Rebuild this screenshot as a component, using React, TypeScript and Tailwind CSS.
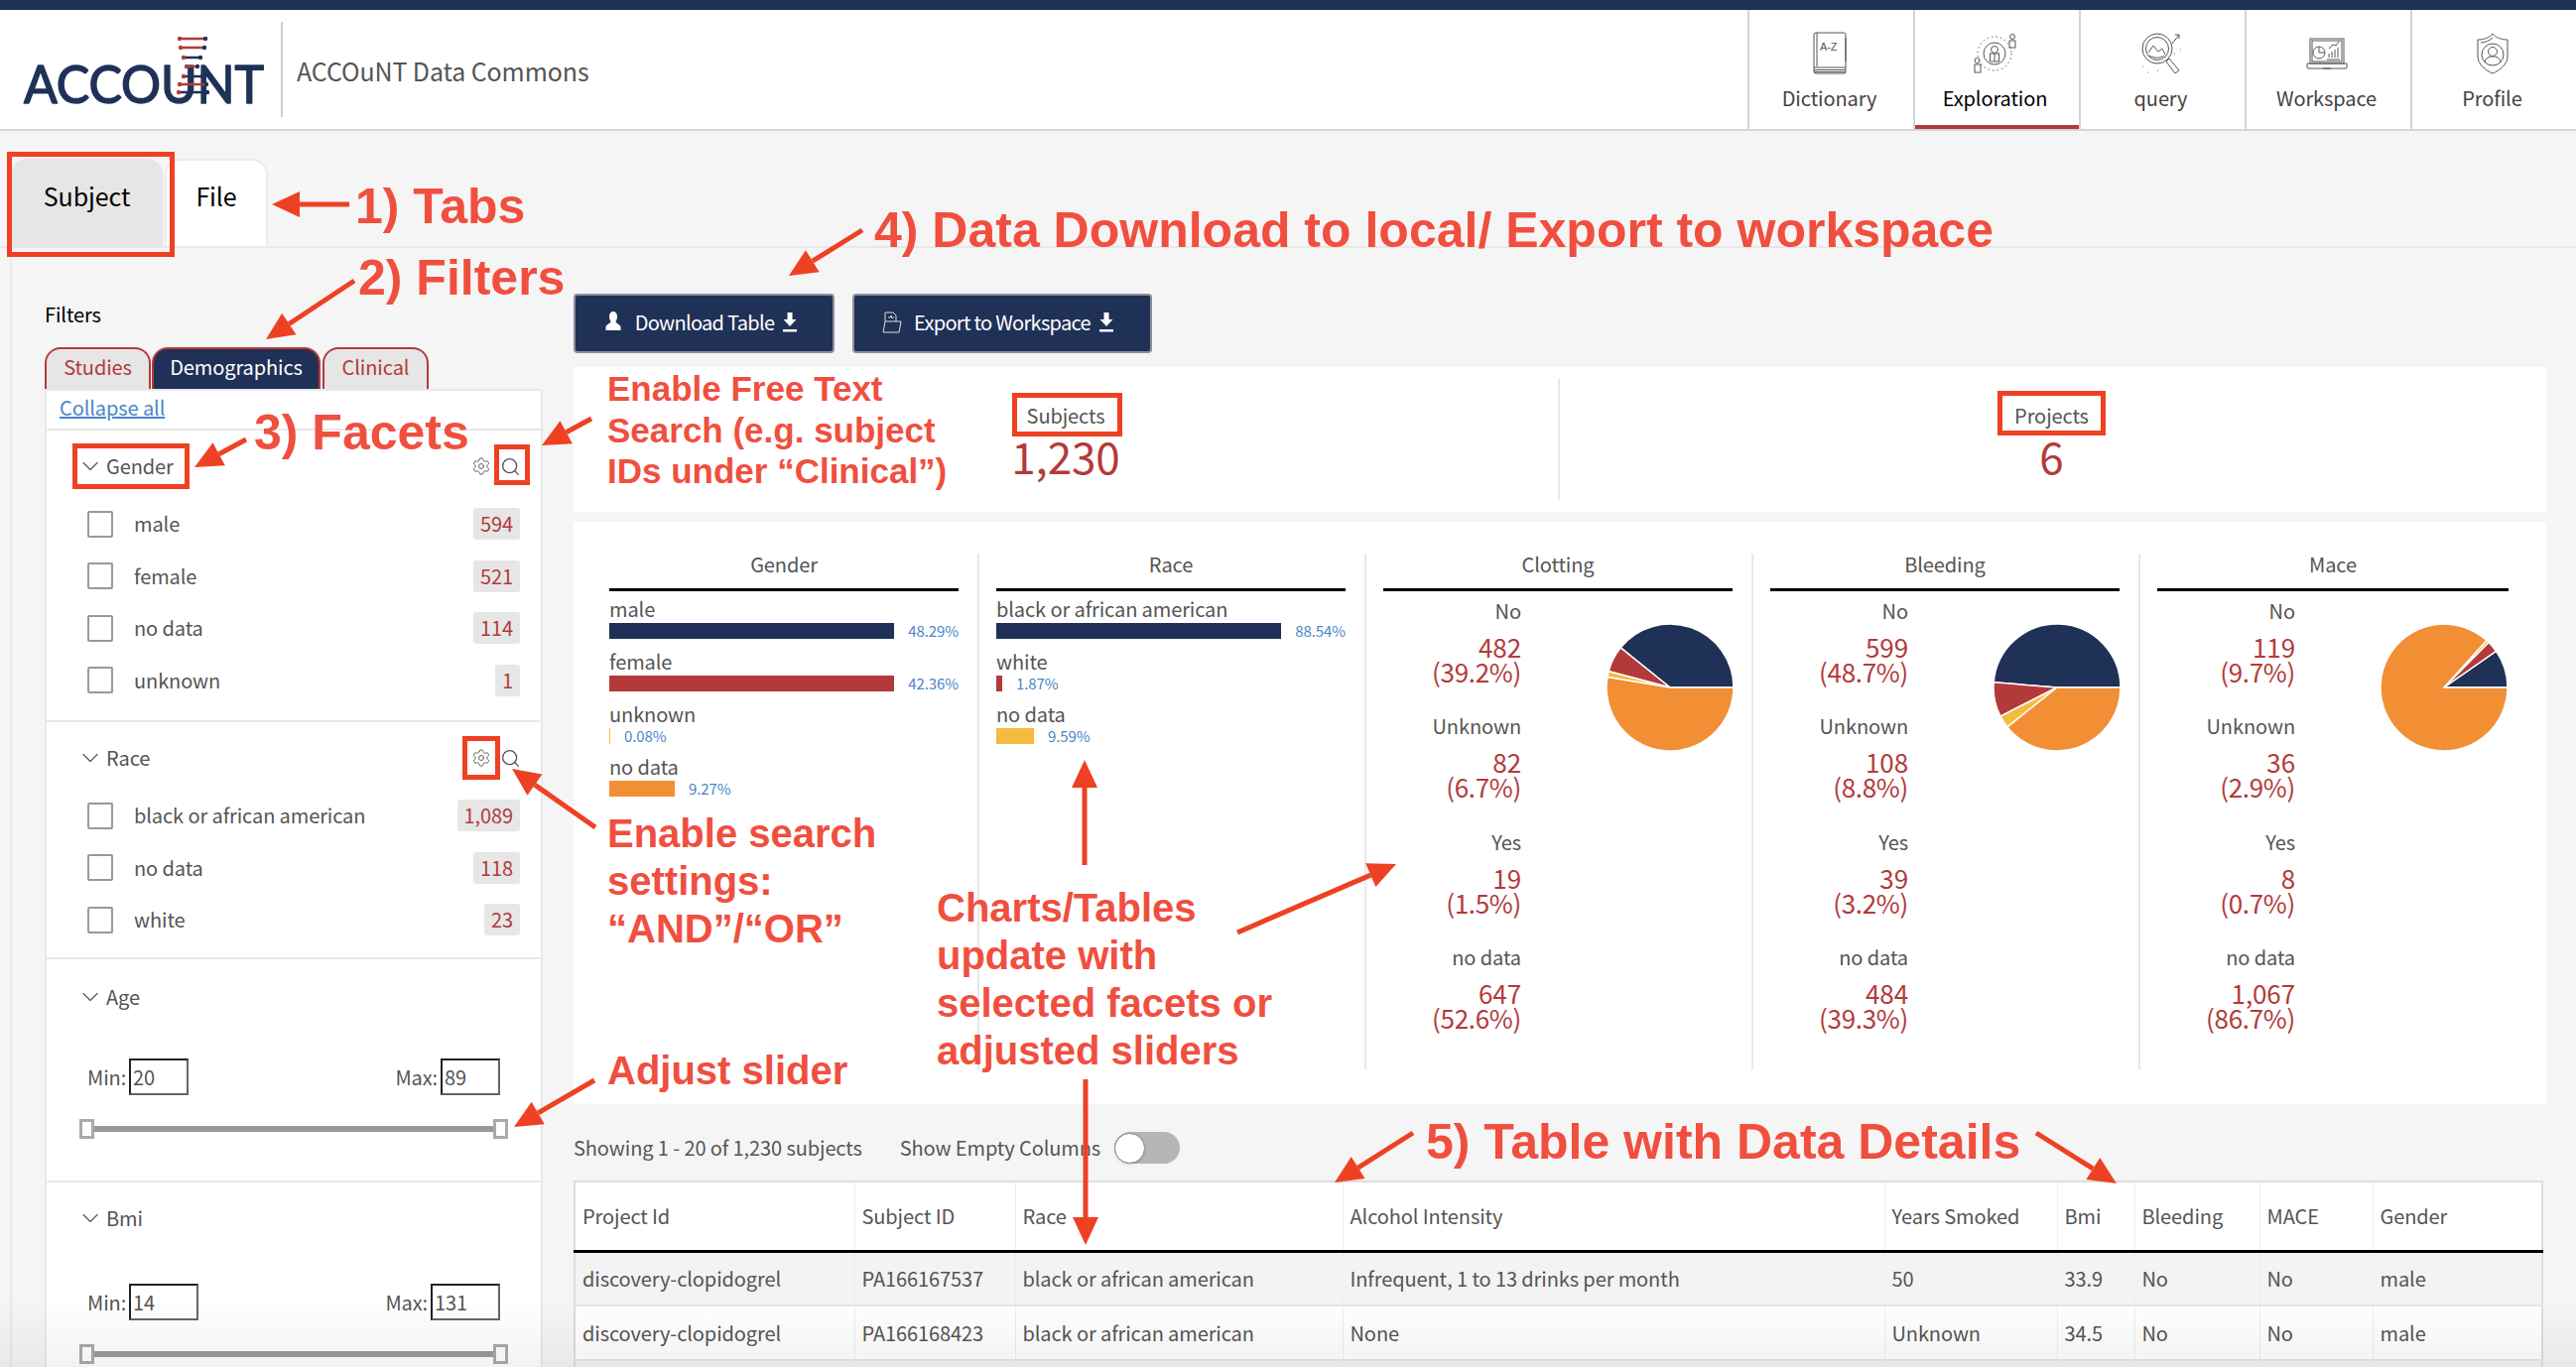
import { ChevronDown, Search, Settings } from "lucide-react";

const NAVY = "#1f3156";
const RED = "#b33a3a";
const SLICE_COLORS = [NAVY, RED, "#f5bb3f", "#f28f35"];

type Bar = { label: string; pct: string; width: number; color: string };

const BAR_CHARTS: { title: string; pad: string; bars: Bar[] }[] = [
  {
    title: "Gender",
    pad: "w-[409px] pl-[36px] pr-[19px]",
    bars: [
      { label: "male", pct: "48.29%", width: 291, color: NAVY },
      { label: "female", pct: "42.36%", width: 291, color: RED },
      { label: "unknown", pct: "0.08%", width: 1, color: "#f5bb3f" },
      { label: "no data", pct: "9.27%", width: 66, color: "#f28f35" },
    ],
  },
  {
    title: "Race",
    pad: "w-[390px] pl-[17px] pr-[19px]",
    bars: [
      { label: "black or african american", pct: "88.54%", width: 291, color: NAVY },
      { label: "white", pct: "1.87%", width: 6, color: RED },
      { label: "no data", pct: "9.59%", width: 38, color: "#f5bb3f" },
    ],
  },
];

const PIE_CHARTS = [
  {
    title: "Clotting",
    values: [39.2, 6.7, 1.5, 52.6],
    stats: [
      ["No", "482", "(39.2%)"],
      ["Unknown", "82", "(6.7%)"],
      ["Yes", "19", "(1.5%)"],
      ["no data", "647", "(52.6%)"],
    ],
  },
  {
    title: "Bleeding",
    values: [48.7, 8.8, 3.2, 39.3],
    stats: [
      ["No", "599", "(48.7%)"],
      ["Unknown", "108", "(8.8%)"],
      ["Yes", "39", "(3.2%)"],
      ["no data", "484", "(39.3%)"],
    ],
  },
  {
    title: "Mace",
    values: [9.7, 2.9, 0.7, 86.7],
    stats: [
      ["No", "119", "(9.7%)"],
      ["Unknown", "36", "(2.9%)"],
      ["Yes", "8", "(0.7%)"],
      ["no data", "1,067", "(86.7%)"],
    ],
  },
];

const TABLE_COLUMNS = [
  { name: "Project Id", width: "w-[282px]" },
  { name: "Subject ID", width: "w-[162px]" },
  { name: "Race", width: "w-[330px]" },
  { name: "Alcohol Intensity", width: "w-[546px]" },
  { name: "Years Smoked", width: "w-[174px]" },
  { name: "Bmi", width: "w-[78px]" },
  { name: "Bleeding", width: "w-[126px]" },
  { name: "MACE", width: "w-[114px]" },
  { name: "Gender", width: "" },
];

const TABLE_ROWS = [
  ["discovery-clopidogrel", "PA166167537", "black or african american", "Infrequent, 1 to 13 drinks per month", "50", "33.9", "No", "No", "male"],
  ["discovery-clopidogrel", "PA166168423", "black or african american", "None", "Unknown", "34.5", "No", "No", "male"],
  ["", "", "", "", "", "", "", "", ""],
];

// Red callouts drawn on top of the page screenshot: [x, center y, size, text]
const NOTES: [number, number, number, string][] = [
  [358, 208, 50, "1) Tabs"],
  [361, 280, 50, "2) Filters"],
  [256, 436, 50, "3) Facets"],
  [881, 232, 50, "4) Data Download to local/ Export to workspace"],
  [612, 392, 35, "Enable Free Text"],
  [612, 434, 35, "Search (e.g. subject"],
  [612, 475, 35, "IDs under “Clinical”)"],
  [612, 840, 40, "Enable search"],
  [612, 888, 40, "settings:"],
  [612, 936, 40, "“AND”/“OR”"],
  [612, 1079, 40, "Adjust slider"],
  [944, 915, 40, "Charts/Tables"],
  [944, 963, 40, "update with"],
  [944, 1011, 40, "selected facets or"],
  [944, 1059, 40, "adjusted sliders"],
  [1437, 1151, 50, "5) Table with Data Details"],
];

const ARROWS: [number, number, number, number][] = [
  [352, 206, 274, 206],
  [357, 283, 268, 342],
  [248, 443, 196, 471],
  [596, 422, 546, 449],
  [869, 232, 795, 278],
  [600, 834, 516, 775],
  [599, 1089, 518, 1136],
  [1093, 872, 1093, 766],
  [1247, 940, 1407, 871],
  [1094, 1088, 1094, 1255],
  [1424, 1142, 1345, 1192],
  [2052, 1142, 2133, 1193],
];

function Arrow({ from, to }: { from: [number, number]; to: [number, number] }) {
  const [x1, y1] = from;
  const [x2, y2] = to;
  const len = Math.hypot(x2 - x1, y2 - y1);
  const ux = (x2 - x1) / len;
  const uy = (y2 - y1) / len;
  const bx = x2 - ux * 28;
  const by = y2 - uy * 28;
  const head = `${x2},${y2} ${bx - uy * 13},${by + ux * 13} ${bx + uy * 13},${by - ux * 13}`;
  return (
    <g>
      <line x1={x1} y1={y1} x2={bx} y2={by} stroke="#ee4123" strokeWidth="5" />
      <polygon points={head} fill="#ee4123" />
    </g>
  );
}

function Pie({ values }: { values: number[] }) {
  const r = 64;
  let start = 0;
  return (
    <svg width="132" height="132" viewBox="-66 -66 132 132" className="shrink-0">
      {values.map((v, i) => {
        const end = start + (v / 100) * Math.PI * 2;
        const d = `M0 0 L${r * Math.cos(start)} ${-r * Math.sin(start)} A${r} ${r} 0 ${v > 50 ? 1 : 0} 0 ${r * Math.cos(end)} ${-r * Math.sin(end)} Z`;
        start = end;
        return <path key={i} d={d} fill={SLICE_COLORS[i]} stroke="#fff" strokeWidth="1.5" />;
      })}
    </svg>
  );
}

function Logo() {
  return (
    <svg width="250" height="72" viewBox="0 0 250 72" className="shrink-0">
      <text x="2" y="67" fontFamily="Lato" fontSize="52" fill={NAVY} stroke={NAVY} strokeWidth="1.5" strokeLinejoin="round" textLength="242" lengthAdjust="spacingAndGlyphs">
        ACCOUNT
      </text>
      {[
        [159, 185, 0, RED],
        [160, 184, 9, RED],
        [163, 180, 19, NAVY],
        [166, 177, 28, RED],
        [163, 182, 38, NAVY],
        [159, 186, 46, RED],
        [158, 187, 54, NAVY],
      ].map(([a, b, y, c], i) => (
        <g key={i}>
          <line x1={a} x2={b} y1={(y as number) + 2} y2={(y as number) + 2} stroke={c as string} strokeWidth="2.5" />
          <circle cx={a as number} cy={(y as number) + 2} r="2.2" fill={RED} />
          <circle cx={b as number} cy={(y as number) + 2} r="2.2" fill={NAVY} />
        </g>
      ))}
    </svg>
  );
}

function NavIcon({ name }: { name: string }) {
  const common = { fill: "none", stroke: "#555", strokeWidth: 1 };
  if (name === "Dictionary")
    return (
      <svg width="44" height="44" viewBox="0 0 44 44" {...common}>
        <rect x="6" y="1" width="32" height="41" rx="2" />
        <path d="M9 1v34M6 36h32M6 38.5h32M6 40.5h32M38 6v24" />
        <text x="12" y="19" fontSize="11" fill="#555" stroke="none" fontFamily="Liberation Sans">A-Z</text>
      </svg>
    );
  if (name === "Exploration")
    return (
      <svg width="44" height="44" viewBox="0 0 44 44" {...common}>
        <circle cx="21" cy="22" r="17" strokeDasharray="1.5 3" />
        <circle cx="21" cy="22" r="11" />
        <circle cx="21" cy="18" r="3.5" />
        <rect x="16.5" y="22" width="9" height="8" />
        <path d="M21 22v8" />
        <circle cx="39" cy="5" r="2.5" />
        <rect x="36" y="9" width="6" height="7" />
        <circle cx="3.5" cy="29" r="2.5" />
        <rect x="1" y="33" width="6" height="8" />
      </svg>
    );
  if (name === "query")
    return (
      <svg width="44" height="44" viewBox="0 0 44 44" {...common}>
        <circle cx="18" cy="17" r="15" />
        <circle cx="18" cy="17" r="11.5" />
        <path d="M9 21l5-7 5 6 4-3 3 6M10 24c5 3 11 3 15 0" />
        <path d="M27 30l3-3 10 12-4 3zM33 12l7-9M36 3h4v4" />
        <path d="M3 35h.5M8 41h.5M18 39h.5M41 18h.5M35 22h.5" strokeWidth="1.5" />
      </svg>
    );
  if (name === "Workspace")
    return (
      <svg width="44" height="44" viewBox="0 0 44 44" {...common}>
        <rect x="5" y="7" width="34" height="25" />
        <rect x="7" y="9" width="30" height="21" />
        <path d="M2 32h40v4a1 1 0 0 1-1 1H3a1 1 0 0 1-1-1zM18 37h8" />
        <circle cx="14" cy="21" r="6" />
        <path d="M14 15v6h6M24 26v-4M27 26v-6M30 26v-8M33 26v-10M24 17l4-4 3 1 3-4" />
        <path d="M22 28h13" />
      </svg>
    );
  return (
    <svg width="44" height="44" viewBox="0 0 44 44" {...common}>
      <path d="M22 2c-3 4-9 6-15 6v17c0 8 8 14 15 17 7-3 15-9 15-17V8c-6 0-12-2-15-6z" />
      <path d="M22 6c-3 3-8 5-12 5" />
      <circle cx="22" cy="23" r="11" />
      <circle cx="22" cy="20" r="4.5" />
      <path d="M14 31c1-5 4-6 8-6s7 1 8 6" />
    </svg>
  );
}

function NavItem({ name, active }: { name: string; active?: boolean }) {
  return (
    <div className={`relative flex w-[167px] flex-col items-center border-l-2 border-[#d5d5d5] pt-[21px] pr-[4px] ${active ? "text-black" : "text-[#444]"}`}>
      <div className="flex h-[46px] items-center justify-center">
        <NavIcon name={name} />
      </div>
      <span className="mt-[9px] text-[20px] leading-[26px]">{name}</span>
      {active && <div className="absolute right-0 bottom-0 left-0 h-[4px] bg-[#b33a3a]" />}
    </div>
  );
}

function FacetHeader({ name, tools }: { name: string; tools?: boolean }) {
  return (
    <div className="flex h-[36px] items-center pr-[20px] pl-[30px] text-[20px] text-[#555]">
      <ChevronDown size={28} strokeWidth={1} className="mr-[2px] text-[#555]" />
      <span className="leading-[26px]">{name}</span>
      {tools && (
        <div className="ml-auto flex items-center gap-[9px] text-[#555]">
          <Settings size={20} strokeWidth={1.1} />
          <Search size={21} strokeWidth={1.5} />
        </div>
      )}
    </div>
  );
}

function FacetRow({ label, count }: { label: string; count: string }) {
  return (
    <div className="flex h-[52.5px] items-center pr-[21px] pl-[41px] text-[20px] text-[#555]">
      <div className="h-[27px] w-[26px] rounded-[2px] border-2 border-[#999] bg-white" />
      <span className="ml-[21px] leading-[26px]">{label}</span>
      <span className="ml-auto flex h-[32px] items-center rounded-[3px] bg-[#e6e6e6] px-[7px] leading-[26px] text-[#b33a3a]">{count}</span>
    </div>
  );
}

function RangeFacet({ min, max, inputWidth, gap }: { min: string; max: string; inputWidth: string; gap: string }) {
  const box = `h-[37px] ${inputWidth} border-2 border-t-[#222] border-r-[#666] border-b-[#666] border-l-[#222] bg-white pl-[2px] text-[20px] text-[#555] outline-none`;
  return (
    <>
      <div className={`flex items-center justify-between pr-[41px] pl-[41px] text-[20px] text-[#555] ${gap}`}>
        <label className="flex items-center gap-[3px]">
          Min:
          <input readOnly value={min} className={box} />
        </label>
        <label className="flex items-center gap-[3px]">
          Max:
          <input readOnly value={max} className={box} />
        </label>
      </div>
      <div className="mt-[24px] flex items-center pl-[33px]">
        <div className="h-[20px] w-[15px] border-[3px] border-[#aaa] bg-white" />
        <div className="h-[6px] w-[402px] bg-[#999]" />
        <div className="h-[20px] w-[15px] border-[3px] border-[#aaa] bg-white" />
      </div>
    </>
  );
}

function FilterPanel() {
  return (
    <aside className="w-[566px] shrink-0 pt-[55px] pl-[33px]">
      <div className="text-[20px] leading-[24px] text-black">Filters</div>
      <div className="mt-[21px] flex gap-[1px]">
        <div className="flex h-[42px] w-[107px] items-center justify-center rounded-t-[16px] border-2 border-b-0 border-[#b33a3a] bg-[#e6e6e6] pb-[4px] text-[20px] text-[#b33a3a]">Studies</div>
        <div className="flex h-[42px] w-[170px] items-center justify-center rounded-t-[16px] border-2 border-b-0 border-[#b33a3a] bg-[#1f3156] pb-[4px] text-[20px] text-white">Demographics</div>
        <div className="ml-[1px] flex h-[42px] w-[107px] items-center justify-center rounded-t-[16px] border-2 border-b-0 border-[#b33a3a] bg-[#e6e6e6] pb-[4px] text-[20px] text-[#b33a3a]">Clinical</div>
      </div>
      <div className="w-[502px] border-x-2 border-t-2 border-[#e8e8e8] bg-white">
        <div className="flex h-[40px] items-center border-b-2 border-[#e8e8e8] pb-[5px] pl-[13px]">
          <span className="text-[20px] leading-[26px] text-[#4a86c8] underline">Collapse all</span>
        </div>
        <section className="h-[294px] border-b-2 border-[#e8e8e8] pt-[18px]">
          <FacetHeader name="Gender" tools />
          <div className="mt-[14px]">
            <FacetRow label="male" count="594" />
            <FacetRow label="female" count="521" />
            <FacetRow label="no data" count="114" />
            <FacetRow label="unknown" count="1" />
          </div>
        </section>
        <section className="h-[239px] border-b-2 border-[#e8e8e8] pt-[18px]">
          <FacetHeader name="Race" tools />
          <div className="mt-[14px]">
            <FacetRow label="black or african american" count="1,089" />
            <FacetRow label="no data" count="118" />
            <FacetRow label="white" count="23" />
          </div>
        </section>
        <section className="h-[225px] border-b-2 border-[#e8e8e8] pt-[20px]">
          <FacetHeader name="Age" />
          <RangeFacet min="20" max="89" inputWidth="w-[60px]" gap="mt-[44px]" />
        </section>
        <section className="h-[240px] pt-[18px]">
          <FacetHeader name="Bmi" />
          <RangeFacet min="14" max="131" inputWidth="w-[70px]" gap="mt-[48px]" />
        </section>
      </div>
    </aside>
  );
}

function ChartTitle({ title }: { title: string }) {
  return <div className="h-[38px] border-b-[3px] border-black text-center text-[20px] leading-[22px] text-[#555]">{title}</div>;
}

function BarColumn({ chart }: { chart: (typeof BAR_CHARTS)[number] }) {
  return (
    <div className={`h-[520px] shrink-0 border-r-2 border-[#e8e8e8] ${chart.pad}`}>
      <ChartTitle title={chart.title} />
      <div className="mt-[6px]">
        {chart.bars.map((bar) => (
          <div key={bar.label} className="h-[53px]">
            <div className="text-[20px] leading-[24px] text-[#555]">{bar.label}</div>
            <div className="mt-[2px] flex items-center">
              <div className="h-[16px]" style={{ width: bar.width, backgroundColor: bar.color }} />
              <span className="ml-[14px] text-[15px] leading-[16px] text-[#4a86c8]">{bar.pct}</span>
            </div>
          </div>
        ))}
      </div>
    </div>
  );
}

function PieColumn({ chart, last }: { chart: (typeof PIE_CHARTS)[number]; last?: boolean }) {
  return (
    <div className={`h-[520px] w-[390px] shrink-0 pr-[19px] pl-[17px] ${last ? "" : "border-r-2 border-[#e8e8e8]"}`}>
      <ChartTitle title={chart.title} />
      <div className="flex">
        <div className="mt-[8px] w-[139px] shrink-0 text-right">
          {chart.stats.map(([label, value, pct]) => (
            <div key={label} className="h-[116.3px]">
              <div className="text-[20px] leading-[24px] text-[#555]">{label}</div>
              <div className="mt-[11px] text-[26px] leading-[25px] text-[#b33a3a]">{value}</div>
              <div className="text-[26px] leading-[25px] tracking-[-0.3px] text-[#b33a3a]">{pct}</div>
            </div>
          ))}
        </div>
        <div className="mt-[31px] ml-[84px] shrink-0">
          <Pie values={chart.values} />
        </div>
      </div>
    </div>
  );
}

function DownloadGlyph() {
  return (
    <svg width="16" height="20" viewBox="0 0 16 20" fill="#fff">
      <path d="M5.5 0h5v7h4L8 14 1.500 7h4zM1 17h14v2.500H1z" />
    </svg>
  );
}

function MainPanel() {
  return (
    <div className="w-[1988px] shrink-0 pt-[46px]">
      <div className="flex gap-[18px]">
        <button className="flex h-[60px] w-[263px] items-center justify-center gap-[8px] rounded-[4px] border-2 border-[#8a8f9a] bg-[#1f3156] pr-[5px] pb-[2px] text-[20px] tracking-[-0.7px] text-white">
          <svg width="16" height="22" viewBox="0 0 16 22" fill="#fff">
            <path d="M8 0c2.500 0 4 2 4 5s-1 4-1.500 5c0 2 4.500 3 5 5.500V19H.500v-3.500C1 13 5.500 12 5.500 10 5 9 4 8 4 5s1.500-5 4-5z" />
          </svg>
          <span className="ml-[6px]">Download Table</span>
          <DownloadGlyph />
        </button>
        <button className="flex h-[60px] w-[302px] items-center justify-center gap-[8px] rounded-[4px] border-2 border-[#8a8f9a] bg-[#1f3156] pr-[8px] pb-[2px] text-[20px] tracking-[-0.7px] text-white">
          <svg width="20" height="32" viewBox="0 0 20 32" fill="none" stroke="#ddd" strokeWidth="1">
            <path d="M3 15V6h8l3 3v6M1 26l2-11h16l-2 11zM6 11h2l1-2 1 3 1-1h1" />
          </svg>
          <span className="ml-[4px]">Export to Workspace</span>
          <DownloadGlyph />
        </button>
      </div>

      <div className="mt-[14px] grid h-[146px] grid-cols-2 bg-white py-[12px]">
        <div className="flex flex-col items-center border-r-2 border-[#e8e8e8] pt-[25px]">
          <div className="text-[20px] leading-[24px] text-[#555]">Subjects</div>
          <div className="mt-[3px] text-[44px] leading-[50px] text-[#b33a3a]">1,230</div>
        </div>
        <div className="flex flex-col items-center pt-[25px] pr-[3px]">
          <div className="text-[20px] leading-[24px] text-[#555]">Projects</div>
          <div className="mt-[3px] text-[44px] leading-[50px] text-[#b33a3a]">6</div>
        </div>
      </div>

      <div className="mt-[10px] flex h-[587px] bg-white pt-[32px]">
        {BAR_CHARTS.map((chart) => (
          <BarColumn key={chart.title} chart={chart} />
        ))}
        {PIE_CHARTS.map((chart, i) => (
          <PieColumn key={chart.title} chart={chart} last={i === PIE_CHARTS.length - 1} />
        ))}
      </div>

      <div className="mt-[27px] flex h-[34px] items-center text-[20px] text-[#555]">
        <span>Showing 1 - 20 of 1,230 subjects</span>
        <span className="ml-[38px]">Show Empty Columns</span>
        <div className="ml-[14px] flex h-[32px] w-[66px] items-center rounded-full bg-[#b5b5b5]">
          <div className="h-[31px] w-[31px] rounded-full border border-[#888] bg-white shadow" />
        </div>
      </div>

      <table className="mt-[16px] w-[1985px] table-fixed border-collapse border-x-2 border-t-2 border-[#ddd] text-left text-[20px] text-[#555]">
        <thead>
          <tr className="h-[70px] border-b-[3px] border-black bg-white">
            {TABLE_COLUMNS.map((col) => (
              <th key={col.name} className={`border-x border-[#eee] px-[7px] font-normal ${col.width}`}>
                {col.name}
              </th>
            ))}
          </tr>
        </thead>
        <tbody>
          {TABLE_ROWS.map((row, i) => (
            <tr key={i} className={`h-[55px] border-b-2 border-[#e5e5e5] ${i % 2 === 0 ? "bg-[#f3f3f3]" : "bg-white"}`}>
              {row.map((cell, j) => (
                <td key={j} className="border-x border-[#eee] px-[7px]">
                  {cell}
                </td>
              ))}
            </tr>
          ))}
        </tbody>
      </table>
    </div>
  );
}

function RedBox({ className }: { className: string }) {
  return <div className={`absolute border-[5px] border-[#ee4123] ${className}`} />;
}

export default function App() {
  return (
    <div className="relative h-[1378px] w-[2596px] overflow-hidden bg-[#f5f5f5] font-['Noto_Sans_CJK_SC','Source_Sans_Pro',sans-serif] tracking-[-0.1px]">
      <div className="h-[10px] bg-[#1f3156]" />
      <header className="flex h-[122px] border-b-2 border-[#d5d5d5] bg-white">
        <div className="mt-[27px] ml-[22px]">
          <Logo />
        </div>
        <div className="mt-[12px] ml-[11px] h-[96px] w-[2px] bg-[#ccc]" />
        <div className="ml-[14px] flex items-center pt-[2px] text-[25px] leading-[30px] text-[#555]">ACCOuNT Data Commons</div>
        <nav className="ml-auto flex">
          {["Dictionary", "Exploration", "query", "Workspace", "Profile"].map((name) => (
            <NavItem key={name} name={name} active={name === "Exploration"} />
          ))}
        </nav>
      </header>

      <div className="flex h-[118px] items-end border-b-2 border-[#e8e8e8] pl-[11px]">
        <div className="flex h-[88px] w-[153px] justify-center rounded-t-[16px] bg-[#e6e6e6] pt-[22px] text-[25px] leading-[30px] text-black">Subject</div>
        <div className="ml-[2px] flex h-[88px] w-[104px] justify-center rounded-t-[16px] border-2 border-b-0 border-[#ececec] bg-white pt-[20px] text-[25px] leading-[30px] text-black">File</div>
      </div>

      <div className="ml-[10px] flex border-l-2 border-[#e8e8e8]">
        <FilterPanel />
        <MainPanel />
      </div>

      {/* soft fade the original page has at the very bottom */}
      <div className="pointer-events-none absolute right-0 bottom-0 left-0 h-[70px] bg-gradient-to-b from-transparent to-black/5" />

      {/* annotations */}
      <svg className="pointer-events-none absolute top-0 left-0" width="2596" height="1378">
        {ARROWS.map(([x1, y1, x2, y2], i) => (
          <Arrow key={i} from={[x1, y1]} to={[x2, y2]} />
        ))}
      </svg>
      <RedBox className="top-[153px] left-[7px] h-[106px] w-[169px]" />
      <RedBox className="top-[447px] left-[73px] h-[46px] w-[118px]" />
      <RedBox className="top-[448px] left-[498px] h-[41px] w-[36px]" />
      <RedBox className="top-[742px] left-[466px] h-[44px] w-[38px]" />
      <RedBox className="top-[396px] left-[1020px] h-[44px] w-[111px]" />
      <RedBox className="top-[394px] left-[2013px] h-[45px] w-[109px]" />
      {NOTES.map(([x, y, size, text]) => (
        <div
          key={text}
          className="absolute font-['Liberation_Sans',sans-serif] font-bold tracking-normal whitespace-nowrap text-[#f04f3f]"
          style={{ left: x, top: y - size * 0.6, fontSize: size, lineHeight: `${size * 1.2}px` }}
        >
          {text}
        </div>
      ))}
    </div>
  );
}
